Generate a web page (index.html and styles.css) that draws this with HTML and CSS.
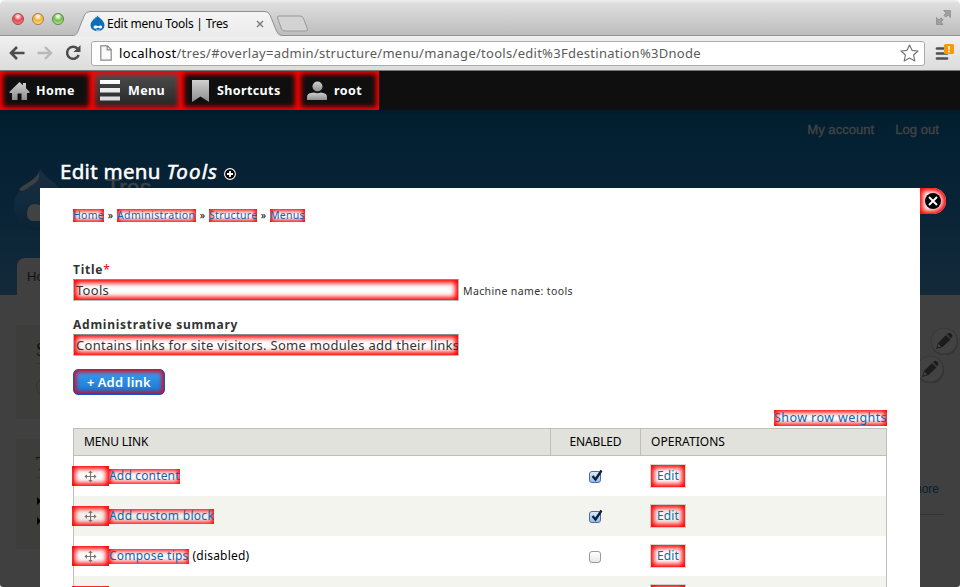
FILE: index.html
```html
<!DOCTYPE html>
<html lang="en">
<head>
<meta charset="utf-8">
<title>Edit menu Tools | Tres</title>
<link rel="stylesheet" href="styles.css">
</head>
<body>
<svg class="defs" width="0" height="0" aria-hidden="true">
  <defs>
    <linearGradient id="gray" x1="0" y1="0" x2="0" y2="1"><stop offset="0" stop-color="#cfcfcf"/><stop offset="1" stop-color="#8e8e8e"/></linearGradient>
    <linearGradient id="light" gradientUnits="userSpaceOnUse" x1="0" y1="0" x2="0" y2="21"><stop offset="0" stop-color="#fff"/><stop offset="1" stop-color="#d8d8d8"/></linearGradient>
    <linearGradient id="tabfill" x1="0" y1="0" x2="0" y2="1"><stop offset="0" stop-color="#f4f4f4"/><stop offset="1" stop-color="#ebebeb"/></linearGradient>
    <linearGradient id="drop" x1="0" y1="0" x2="0" y2="1"><stop offset="0" stop-color="#1a2d3b"/><stop offset=".5" stop-color="#122b3f"/><stop offset="1" stop-color="#0b2233"/></linearGradient>
    <symbol id="move" viewBox="0 0 13 13"><path d="M6.500 1v11M1 6.500h11" fill="none" stroke="#777" stroke-width="1.100"/><path d="M4.300 3 6.500.4 8.700 3zM4.300 10l2.200 2.600L8.700 10zM3 4.300.4 6.500 3 8.700zM10 4.300l2.600 2.200L10 8.700z" fill="#777"/></symbol>
    <symbol id="pencil" viewBox="0 0 28 28"><circle cx="14.500" cy="14.800" r="13" fill="none" stroke="#333" stroke-width="1.500"/><circle cx="14" cy="14" r="13" fill="#424242" stroke="#393939" stroke-width="1"/><path d="M6 22l2-6 8-8 4.500 4.500-8 7.500z" fill="#1c1c1c"/><path d="M17 7l2-1.300q2.800.3 3.500 3.300l-1.500 2.500z" fill="#1c1c1c"/><path d="M7.200 20.500l1.300-3.500 2.500 2.500z" fill="#484848"/></symbol>
  </defs>
</svg>

<header class="browser">
  <div class="tabstrip">
    <div class="lights"><i class="light red"></i><i class="light amber"></i><i class="light green"></i></div>
    <div class="tab">
      <svg class="tab-shape" width="236" height="26" viewBox="0 0 236 26"><path d="M0 24.500C4 24.500 5 23 6.500 19L12.500 4Q14 .5 18 .5H193Q196.500.5 198 4L204.500 20Q206.500 24.500 210 24.500V26H0Z" fill="url(#tabfill)"/><path d="M0 24.500C4 24.500 5 23 6.500 19L12.500 4Q14 .5 18 .5H193Q196.500.5 198 4L204.500 20Q206.500 24.500 210 24.500" fill="none" stroke="#8f8f8f"/></svg>
      <svg class="favicon" width="15" height="17" viewBox="0 0 15 17"><path d="M7.500.5C8.500 3 14.500 5 14.500 10.300A7 6 0 0 1 .5 10.300C.5 5 6.500 4 7.500.5Z" fill="#0c6fb5"/><path d="M6 1.800Q4.500 4 3 4.800" stroke="#55a7dc" fill="none"/><path d="M3.500 12.300C3.500 10.300 6.300 9.800 8 11.300c2-1.300 4-1.300 4 .6 0 2-2.200 1.900-3.900.7-2 1.500-4.600 1.400-4.600-.3Z" fill="#fff"/><path d="M6 14.900q2 .9 3.800 0" fill="none" stroke="#fff" stroke-width=".8"/></svg>
      <span class="tab-title">Edit menu Tools | Tres</span>
      <svg class="tab-close" width="8" height="8" viewBox="0 0 8 8"><path d="M1 1l6 6M7 1 1 7" stroke="#777" stroke-width="1.400"/></svg>
    </div>
    <svg class="newtab" width="34" height="18" viewBox="0 0 34 18"><path d="M3 1H24Q26.500 1 27.500 3.500L31.500 14Q32 16 29.500 16H9Q6.500 16 5.500 14L1.500 3Q1 1 3 1Z" fill="#d3d3d3" stroke="#999"/></svg>
    <svg class="expand" width="15" height="15" viewBox="0 0 15 15"><path d="M7.500.5H14.500V7.500L12 5 9.800 7.200 7.800 5.200 10 3ZM7 14.500H.5V7.500L3 10 5.200 7.800 7.200 9.800 5 12Z" fill="#a0a0a0" stroke="#7f7f7f" stroke-width=".6"/></svg>
  </div>
  <div class="navbar">
    <svg width="16" height="14" viewBox="0 0 16 14"><path d="M8 1 2 7l6 6M2 7h13.500" fill="none" stroke="#4c4c4c" stroke-width="2.600"/></svg>
    <svg class="forward" width="16" height="14" viewBox="0 0 16 14"><path d="M8 1l6 6-6 6M14 7H.5" fill="none" stroke="#b9b9b9" stroke-width="2.400"/></svg>
    <svg class="reload" width="16" height="16" viewBox="0 0 16 16"><path d="M12.500 3.700A6 6 0 1 0 13.700 10" fill="none" stroke="#4c4c4c" stroke-width="2.500"/><path d="M15.500 0V7H8.500Z" fill="#4c4c4c"/></svg>
    <div class="omnibox">
      <svg width="12" height="16" viewBox="0 0 12 16"><path d="M.8.8H7.500L11.200 4.500V15.200H.8ZM7.200.8V4.800H11.200" fill="#fafafa" stroke="#8a8a8a" stroke-width="1.200"/></svg>
      <span class="url"><b>localhost</b>/tres/#overlay=admin/structure/menu/manage/tools/edit%3Fdestination%3Dnode</span>
      <svg class="star" width="19" height="18" viewBox="0 0 19 18"><path d="M9.500 1 12 6.300l6 .7-4.400 4 1.200 6-5.300-3-5.300 3 1.200-6L1 7l6-.7Z" fill="#fff" stroke="#757575" stroke-width="1.200" stroke-linejoin="round"/></svg>
    </div>
    <svg class="wrench" width="19" height="18" viewBox="0 0 19 18"><path d="M2 4.500H12M2 9.500H12M2 14.500H12" stroke="#505050" stroke-width="2.700" stroke-linecap="round"/><rect x="9" y="0" width="10" height="10" rx="1.500" fill="#f39a0b"/><path d="M14 2V5.800M14 6.800V8.300" stroke="#fff" stroke-width="1.700"/></svg>
  </div>
</header>

<nav class="toolbar">
  <a class="item home"><svg width="21" height="20" viewBox="0 0 21 20"><path d="M10.500 1 14 4.300V2H17V7.200L20.500 10.800V12H18V19H12.500V12.500H8.500V19H3V12H.5V10.800Z" fill="url(#gray)"/></svg>Home</a>
  <a class="item menu"><svg width="20" height="21" viewBox="0 0 20 21"><path d="M0 0H20V4H0ZM0 8H20V12.500H0ZM0 16.500H20V20.500H0Z" fill="url(#light)"/></svg>Menu</a>
  <a class="item shortcuts"><svg width="17" height="22" viewBox="0 0 17 22"><path d="M0 0H17V22L8.500 16.500 0 22Z" fill="url(#gray)"/></svg>Shortcuts</a>
  <a class="item user"><svg width="20" height="20" viewBox="0 0 20 20"><circle cx="10.500" cy="5.500" r="5" fill="url(#gray)"/><path d="M0 19V16Q0 12.500 4 12L7 11.500Q10.500 13 14 11.500L16 12Q20 12.500 20 16V19Z" fill="url(#gray)"/></svg>root</a>
</nav>

<div class="viewport">
  <div class="site">
    <div class="site-header">
      <div class="account"><span>My account</span><span>Log out</span></div>
      <div class="branding">
        <svg width="54" height="64" viewBox="0 0 54 64"><path d="M26 0C29 10 53 18 53 38A26 25 0 0 1 0 38C0 18 24 14 26 0Z" fill="url(#drop)"/><path d="M25 4C25 10 26 12 18 17 11 22 9 24 5 22 8 16 22 13 25 4Z" fill="#3a4043"/><path d="M13 46C13 34 23 34 31 40L35 53H22Q13 54 13 46Z" fill="#414244"/></svg>
        <span class="site-name">Tres</span>
      </div>
      <div class="site-tab">Home</div>
    </div>
    <div class="site-body">
      <div class="sidebar">
        <section class="block search"><h2>S</h2><span class="field"></span></section>
        <section class="block tools"><h2>T</h2><ul><li></li><li></li></ul></section>
      </div>
      <div class="content">
        <svg class="edit-a" width="28" height="29"><use href="#pencil" width="28" height="28"/></svg>
        <svg class="edit-b" width="28" height="29"><use href="#pencil" width="28" height="28"/></svg>
        <p class="more">more</p>
      </div>
    </div>
  </div>

  <main class="overlay">
    <h1>Edit menu <em>Tools</em><svg width="12" height="12" viewBox="0 0 12 12"><circle cx="6" cy="6" r="5.400" fill="#000" stroke="#fff" stroke-width="1.100"/><path d="M6 3V9M3 6H9" stroke="#fff" stroke-width="1.800"/></svg></h1>
    <div class="panel">
      <a class="close"><svg width="16" height="16" viewBox="0 0 16 16"><circle cx="8" cy="8" r="8"/><path d="M4 4l8 8M12 4l-8 8" stroke="#fff" stroke-width="1.900"/></svg></a>
      <div class="crumbs"><a class="c1">Home</a><i>»</i><a class="c2">Administration</a><i>»</i><a class="c3">Structure</a><i>»</i><a class="c4">Menus</a></div>
      <label>Title<span class="req">*</span></label>
      <div class="field-row"><div class="input">Tools</div><small>Machine name: tools</small></div>
      <label class="second">Administrative summary</label>
      <div class="field-row"><div class="input">Contains links for site visitors. Some modules add their links</div></div>
      <a class="button"><span>+</span> Add link</a>
      <div class="weights"><a>Show row weights</a></div>
      <div class="table">
        <div class="row head"><span>MENU LINK</span><span>ENABLED</span><span>OPERATIONS</span></div>
        <div class="row"><span><a class="handle"><svg width="13" height="13"><use href="#move"/></svg></a><a class="link">Add content</a></span><span><i class="check on"><svg width="13" height="14" viewBox="0 0 13 14"><path d="M2.500 7 5.500 10.500 11.500 1.500" fill="none" stroke="#0e1d3c" stroke-width="2.300"/></svg></i></span><span><a class="edit">Edit</a></span></div>
        <div class="row"><span><a class="handle"><svg width="13" height="13"><use href="#move"/></svg></a><a class="link block-link">Add custom block</a></span><span><i class="check on"><svg width="13" height="14" viewBox="0 0 13 14"><path d="M2.500 7 5.500 10.500 11.500 1.500" fill="none" stroke="#0e1d3c" stroke-width="2.300"/></svg></i></span><span><a class="edit">Edit</a></span></div>
        <div class="row"><span><a class="handle"><svg width="13" height="13"><use href="#move"/></svg></a><a class="link tips">Compose tips</a><em>(disabled)</em></span><span><i class="check"></i></span><span><a class="edit">Edit</a></span></div>
        <div class="row"><span><a class="handle"></a></span><span></span><span><a class="edit"></a></span></div>
      </div>
    </div>
  </main>
</div>
</body>
</html>
```
FILE: styles.css
```css
* { box-sizing: border-box; }
html { background: #fff; }
body {
  margin: 0;
  width: 960px;
  height: 587px;
  overflow: hidden;
  display: flex;
  flex-direction: column;
  border-radius: 5px 5px 3px 3px;
  font-family: "Noto Sans", sans-serif;
  color: #000;
}
svg { display: block; flex: none; }
.defs { position: absolute; }

/* browser chrome */
.browser { height: 71px; flex: none; }
.tabstrip {
  height: 36px;
  display: flex;
  align-items: flex-start;
  background: linear-gradient(#eee, #dedede 10%, #bdbdbd);
  border-bottom: 1px solid #929292;
}
.lights { display: flex; gap: 8px; padding: 13px 0 0 12px; width: 72px; flex: none; }
.light { width: 12px; height: 12px; border-radius: 50%; }
.red { background: radial-gradient(circle at 50% 25%, #ffd6d6 0 12%, #e8474f 45%, #f0777d 80%); border: 1px solid #a5484b; }
.amber { background: radial-gradient(circle at 50% 25%, #fff1c9 0 12%, #eeaf3c 45%, #fbdc7c 80%); border: 1px solid #a67c3a; }
.green { background: radial-gradient(circle at 50% 25%, #e4f9d5 0 12%, #72bb4e 45%, #aee486 80%); border: 1px solid #5a8546; }
.tab { position: relative; width: 204px; height: 25px; margin-top: 11px; padding-left: 18px; display: flex; align-items: center; flex: none; }
.tab-shape { position: absolute; left: 0; top: 0; }
.favicon { position: relative; }
.tab-title { position: relative; margin-left: 2px; width: 149px; font-size: 12px; letter-spacing: -.22px; white-space: nowrap; }
.tab-close { position: relative; }
.newtab { margin-top: 15px; }
.expand { margin: 10px 9px 0 auto; }
.navbar {
  height: 35px;
  display: flex;
  align-items: center;
  padding: 0 5px 0 9px;
  background: linear-gradient(#f0f0f0, #dcdcdc);
  border-bottom: 1px solid #777;
}
.forward { margin-left: 12px; }
.reload { margin-left: 12px; }
.omnibox {
  width: 834px;
  height: 25px;
  margin-left: 10px;
  padding: 0 5px 0 8px;
  display: flex;
  align-items: center;
  background: #fff;
  border: 1px solid #aaa;
  border-radius: 3px;
  flex: none;
}
.url { margin-left: 7px; font-size: 13px; letter-spacing: .28px; color: #5b5b5b; white-space: nowrap; }
.url b { font-weight: 400; color: #000; }
.star { margin-left: auto; }
.wrench { margin: -1px 0 0 10px; }

/* admin toolbar */
.toolbar { height: 39px; flex: none; display: flex; background: #0f0f0f; }
.item {
  display: flex;
  align-items: center;
  font-size: 12.5px;
  font-weight: 700;
  letter-spacing: .38px;
  color: #fff;
  box-shadow: inset 0 0 5px 3px red;
}
.home { width: 92px; padding-left: 9px; gap: 6px; }
.menu { width: 89px; padding-left: 8px; gap: 8px; background: linear-gradient(#505050, #222); }
.shortcuts { width: 117px; padding-left: 11px; gap: 8px; }
.user { width: 81px; padding-left: 9px; gap: 7px; }
.home, .user { letter-spacing: .45px; }

/* dimmed site */
.viewport { position: relative; flex: 1; min-height: 0; overflow: hidden; background: #404040; }
.site { font-family: "Liberation Sans", sans-serif; }
.site-header { height: 185px; background: linear-gradient(#001a2a, #021f30 4%, #082336 50%, #142a3a); }
.account { display: flex; justify-content: flex-end; gap: 21px; padding: 12px 21px 0 0; height: 58px; font-size: 13px; line-height: 16px; letter-spacing: .05px; color: #434343; -webkit-text-stroke: .4px #434343; }
.branding { display: flex; height: 90px; padding-left: 14px; gap: 38px; }
.site-name { margin-top: 7px; font-size: 23px; line-height: 26px; color: #3e4145; -webkit-text-stroke: .5px #3e4145; }
.site-tab { width: 80px; height: 37px; margin-left: 17px; padding: 10px; border-radius: 8px 8px 0 0; background: #404040; font-size: 13px; color: #111; line-height: 17px; }
.site-body { display: flex; justify-content: space-between; padding: 30px 0 0 16px; }
.sidebar { width: 190px; }
.block { background: #3d3d3c; padding: 16px 20px; color: #111; }
.search { height: 94px; margin-bottom: 20px; }
.tools { height: 110px; }
.block h2 { margin: 0 0 13px; height: 23px; font: 18px/18px "Liberation Serif", serif; border-bottom: 1px solid #333; }
.field { display: block; height: 20px; border: 1px solid #333; border-radius: 10px; }
.block ul { margin: 0; padding: 0; list-style: none; font-size: 13px; line-height: 20px; }
.block li { height: 20px; display: flex; align-items: center; }
.block li::before { content: ""; border: 4px solid transparent; border-left: 4px solid #000; border-right: 0; margin-left: 1px; }
.content { width: 44px; }
.edit-a { margin: 2px 0 0 14px; }
.edit-b { margin: -1px 0 0; }
.more { display: flex; justify-content: flex-end; width: 28px; height: 34px; margin: 97px 0 0; padding-right: 5px; font-size: 12px; line-height: 16px; color: #08202f; border-bottom: 1px solid #333; }

/* overlay */
.overlay { position: absolute; inset: 0 40px 0 40px; display: flex; flex-direction: column; }
h1 { margin: 0; height: 78px; padding: 46px 0 0 20px; display: flex; flex: none; font-size: 20.5px; line-height: 30px; font-weight: 400; letter-spacing: .3px; color: #fff; white-space: pre; -webkit-text-stroke: .5px #fff; }
h1 em { letter-spacing: 1.1px; }
h1 svg { margin: 12px 0 0 6px; }
.panel { position: relative; flex: 1; background: #fff; padding: 21px 33px 0; }
.close { position: absolute; left: 880px; top: 0; width: 26px; height: 26px; padding: 5px; border-radius: 0 13px 13px 0; background: #fff; box-shadow: inset 0 0 5px 3px red; }
.crumbs { display: flex; height: 13px; font-size: 10.5px; line-height: 13px; }
.crumbs a { color: #0a66b4; letter-spacing: .3px; box-shadow: inset 0 0 4px 2px red; white-space: nowrap; }
.crumbs i { width: 13px; text-align: center; font-style: normal; }
.c1 { width: 31px; }
.crumbs .c2 { width: 79px; letter-spacing: .38px; }
.c3 { width: 48px; }
.c4 { width: 35px; }
label { display: block; margin-top: 38px; height: 19px; font-size: 12px; line-height: 19px; font-weight: 700; letter-spacing: .75px; color: #333; }
label.second { margin-top: 14px; }
.req { color: #e00; font-weight: 400; letter-spacing: 0; }
.field-row { display: flex; align-items: center; gap: 4px; height: 22px; }
.input { width: 386px; height: 22px; padding-left: 2px; border: 1px solid #bbb; border-top-color: #888; overflow: hidden; white-space: nowrap; font-size: 13px; line-height: 20px; letter-spacing: .28px; color: #333; box-shadow: inset 0 0 5px 3px red; }
small { margin-top: 2px; font-size: 10.5px; letter-spacing: .38px; color: #333; }
.button { display: flex; align-items: center; justify-content: center; gap: 3px; width: 92px; height: 26px; margin-top: 13px; border: 1px solid #1b4fc4; border-radius: 5px; background: linear-gradient(#3d9ff0, #1673d0); box-shadow: inset 0 0 4px 2px #e0001a; color: #fff; font-size: 13px; font-weight: 600; letter-spacing: .2px; }
.weights { display: flex; justify-content: flex-end; margin-top: 15px; height: 18px; }
.weights a { width: 113px; height: 16px; font-size: 12.5px; line-height: 16px; letter-spacing: .42px; color: #0a66b4; box-shadow: inset 0 0 5px 2.500px red; white-space: nowrap; }
.table { width: 814px; border: 1px solid #bfbfba; border-bottom: 0; font-size: 12px; }
.row { height: 40px; display: grid; grid-template-columns: 476px 90px 246px; }
.row > span { display: flex; align-items: center; }
.row:nth-child(odd):not(.head) { background: #f3f4ee; }
.head { height: 27px; background: #e1e2dc; border-bottom: 1px solid #bfbfba; }
.head > span { padding: 0 0 2px 10px; letter-spacing: -.14px; }
.head > span + span { border-left: 1px solid #bfbfba; }
.head > span:nth-child(2) { padding-left: 0; justify-content: center; }
.head > span:nth-child(3) { letter-spacing: .06px; }
.row > span:nth-child(2) { justify-content: center; }
.row:not(.head) > span:nth-child(3) { padding-left: 11px; }
.handle { width: 37px; height: 20px; margin-left: -2px; display: flex; align-items: center; justify-content: center; box-shadow: inset 0 0 5px 3px red; }
.link { height: 15px; line-height: 14px; letter-spacing: .17px; color: #0a66b4; box-shadow: inset 0 0 5px 2px red; white-space: nowrap; }
.block-link { letter-spacing: .3px; }
.tips { letter-spacing: .22px; }
.row em { margin: -2px 0 0 4px; font-style: normal; letter-spacing: .2px; }
.edit { width: 34px; height: 22px; line-height: 22px; text-align: center; letter-spacing: .13px; color: #0a66b4; outline: 1px solid rgba(120,120,120,.3); box-shadow: inset 0 0 5px 3px red; }
.check { position: relative; width: 12px; height: 12px; margin-top: 2px; border: 1px solid #999; border-radius: 3px; background: linear-gradient(#fff, #e8e8e8); }
.check.on { border-color: #5468a0; background: linear-gradient(#d9ebfb, #8fc0ee); }
.check svg { position: absolute; left: 0; top: -3px; }
```
